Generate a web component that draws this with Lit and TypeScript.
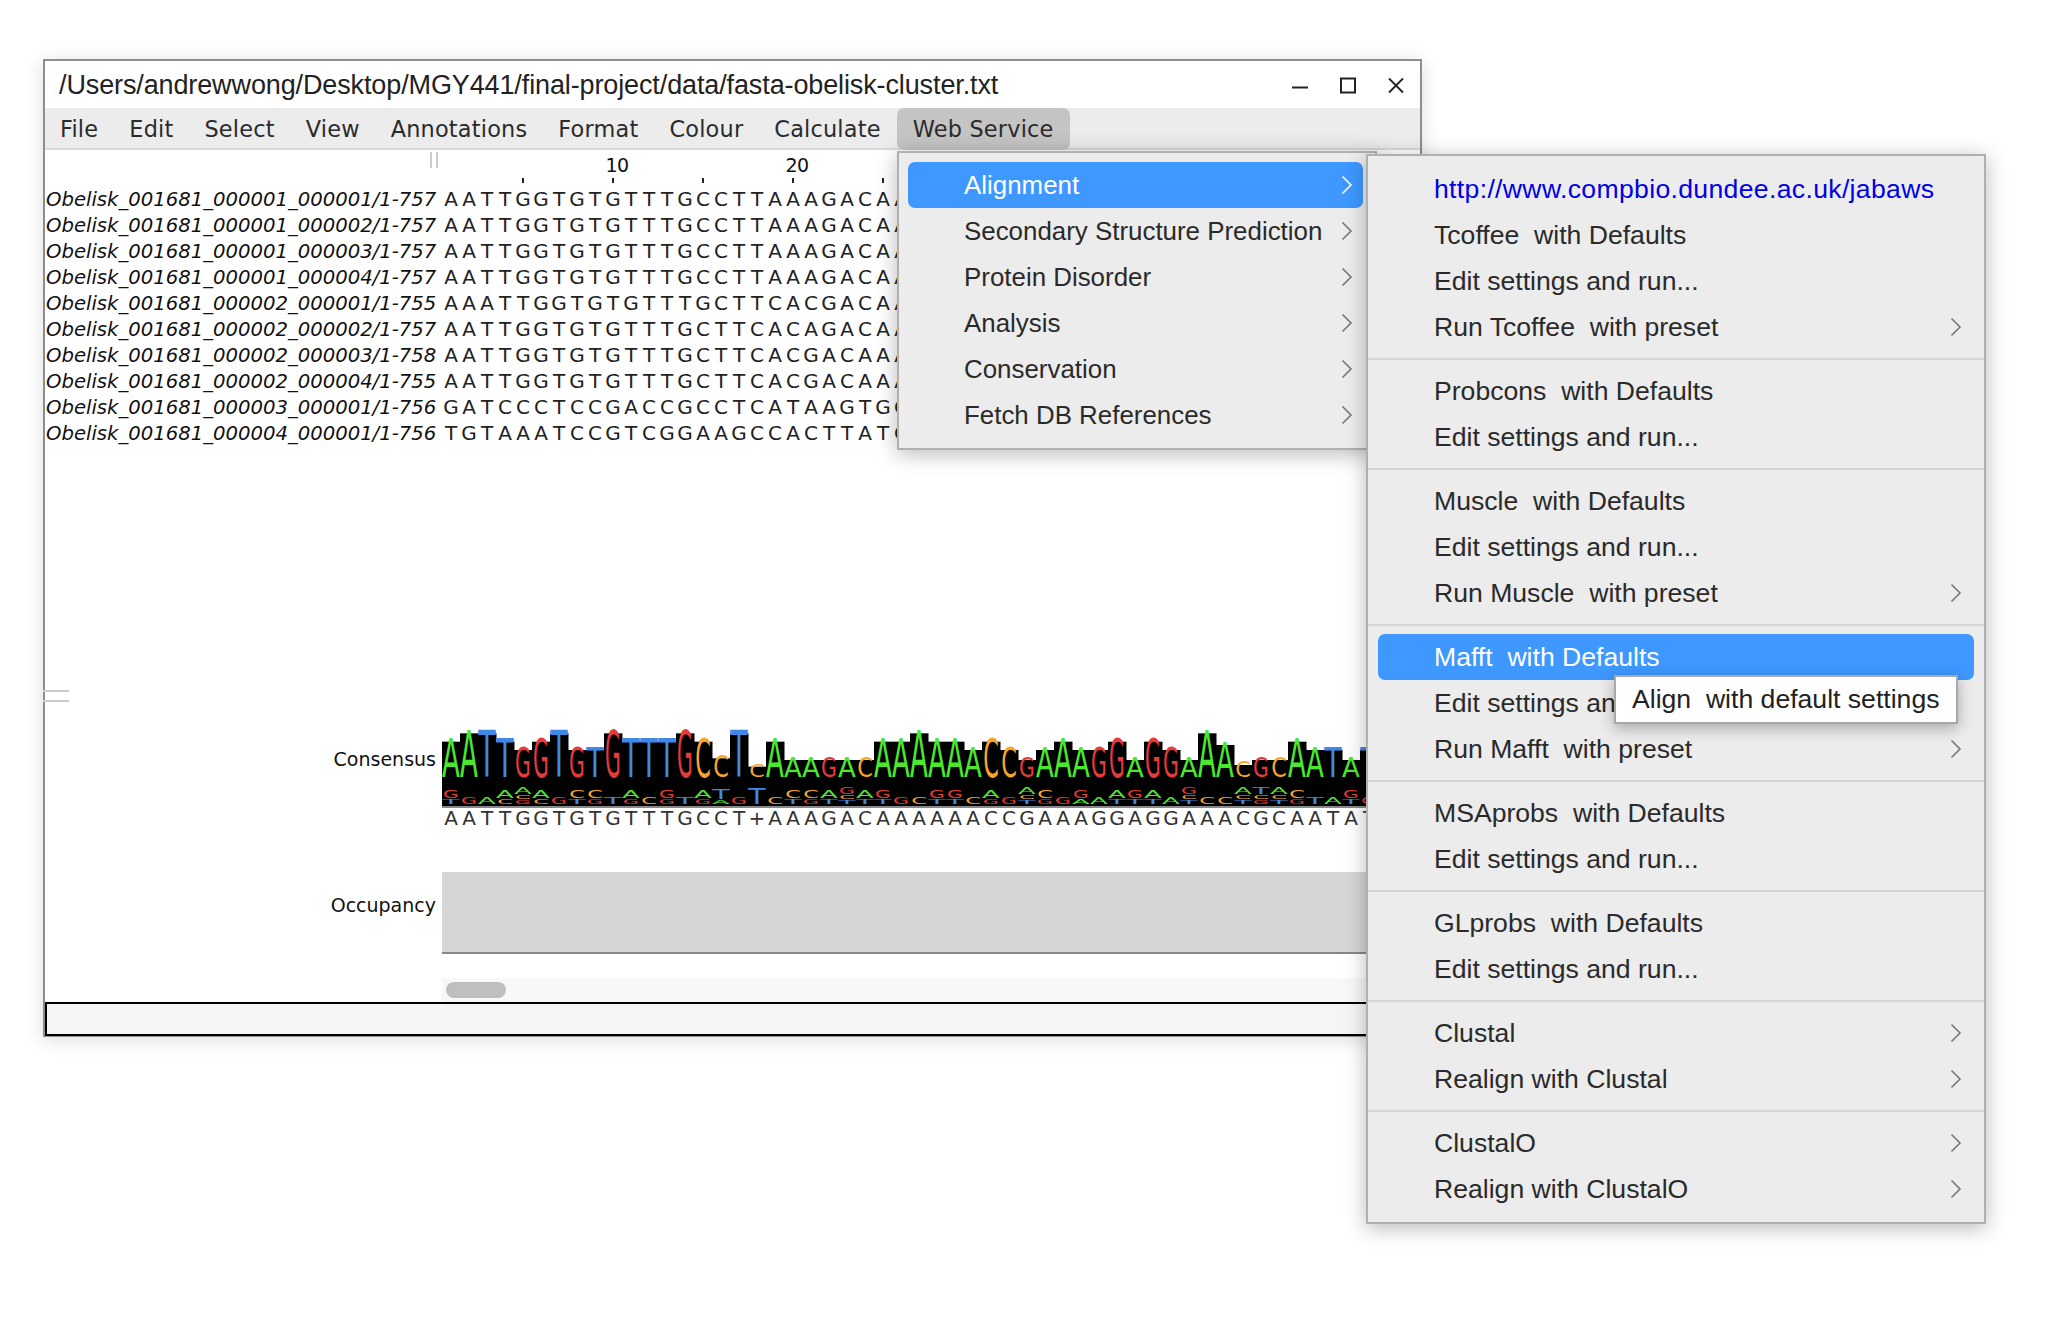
import { LitElement, html, css, svg, nothing } from "lit";
import { customElement } from "lit/decorators.js";

const COL = 18;
const MENU = ["File", "Edit", "Select", "View", "Annotations", "Format", "Colour", "Calculate"];
const SEQS: [string, string][] = [
  ["Obelisk_001681_000001_000001/1-757", "AATTGGTGTGTTTGCCTTAAAGACAA"],
  ["Obelisk_001681_000001_000002/1-757", "AATTGGTGTGTTTGCCTTAAAGACAA"],
  ["Obelisk_001681_000001_000003/1-757", "AATTGGTGTGTTTGCCTTAAAGACAA"],
  ["Obelisk_001681_000001_000004/1-757", "AATTGGTGTGTTTGCCTTAAAGACAA"],
  ["Obelisk_001681_000002_000001/1-755", "AAATTGGTGTGTTTGCTTCACGACAA"],
  ["Obelisk_001681_000002_000002/1-757", "AATTGGTGTGTTTGCTTCACAGACAA"],
  ["Obelisk_001681_000002_000003/1-758", "AATTGGTGTGTTTGCTTCACGACAAA"],
  ["Obelisk_001681_000002_000004/1-755", "AATTGGTGTGTTTGCTTCACGACAAA"],
  ["Obelisk_001681_000003_000001/1-756", "GATCCCTCCGACCGCCTCATAAGTGC"],
  ["Obelisk_001681_000004_000001/1-756", "TGTAAATCCGTCGGAAGCCACTTATC"],
];
const CONSENSUS = "AATTGGTGTGTTTGCCT+AAAGACAAAAAACCGAAAGGAGGAAACGCAATAT";
const TOPS = [55,30,30,55,80,55,30,80,80,30,55,55,55,30,55,105,30,130,55,110,110,110,110,110,55,55,30,55,55,80,55,80,110,80,55,80,80,55,110,55,80,110,30,65,125,110,110,55,80,80,110,80];
const LOWER = ["GT","G","A","AC","ACG","AC","G","CT","CG","T","AG","C","GG","T","AG","TA","G","T","C","CT","CG","AT","GCT","AT","GT","G","C","GT","GT","C","AG","G","ACT","CG","G","GA","A","AT","GT","AT","A","GCT","C","C","ACT","TCG","ACT","CG","T","A","GT","G"];
const SX: Record<string, number> = { A: 1.3, T: 1.42, G: 1.02, C: 1.12 };
const MAIN = ["Alignment", "Secondary Structure Prediction", "Protein Disorder", "Analysis", "Conservation", "Fetch DB References"];

type Item = { t: string; more?: boolean; link?: boolean; on?: boolean; tip?: boolean } | null;
const EDIT = "Edit settings and run...";
const SUB: Item[] = [
  { t: "http://www.compbio.dundee.ac.uk/jabaws", link: true },
  { t: "Tcoffee  with Defaults" }, { t: EDIT }, { t: "Run Tcoffee  with preset", more: true }, null,
  { t: "Probcons  with Defaults" }, { t: EDIT }, null,
  { t: "Muscle  with Defaults" }, { t: EDIT }, { t: "Run Muscle  with preset", more: true }, null,
  { t: "Mafft  with Defaults", on: true }, { t: EDIT, tip: true }, { t: "Run Mafft  with preset", more: true }, null,
  { t: "MSAprobs  with Defaults" }, { t: EDIT }, null,
  { t: "GLprobs  with Defaults" }, { t: EDIT }, null,
  { t: "Clustal", more: true }, { t: "Realign with Clustal", more: true }, null,
  { t: "ClustalO", more: true }, { t: "Realign with ClustalO", more: true },
];

const chevron = html`<svg class="chev" width="12" height="20" viewBox="0 0 12 20"><path d="M1.5 1.5 L10 10 L1.5 18.5"></path></svg>`;

function glyph(l: string, cx: number, baseline: number, h: number) {
  const sy = h / 14.6;
  const sx = SX[l];
  return svg`<text class=${"l" + l} text-anchor="middle" transform="translate(${cx} ${baseline}) scale(${sx} ${sy})">${l}</text>`;
}

function logo() {
  const W = 924, H = 84, BASE = 55;
  const parts: unknown[] = [];
  TOPS.forEach((top, i) => {
    const x = i * COL;
    const h = (170 - top) / 3;
    parts.push(svg`<rect x=${x} y=${BASE - h + 3} width=${COL + 0.5} height=${H - BASE + h - 3} fill="#000"></rect>`);
  });
  TOPS.forEach((top, i) => {
    const cx = i * COL + COL / 2;
    const h = (170 - top) / 3;
    const l = CONSENSUS[i] === "+" ? "C" : CONSENSUS[i];
    parts.push(glyph(l, cx, BASE, h));
    const low = LOWER[i];
    const sizes = low.length === 1 ? [i === 17 ? 15 : 6] : low.length === 2 ? (i === 15 ? [10, 4] : [8, 5]) : [6, 4, 4];
    let y = 82;
    for (let k = low.length - 1; k >= 0; k--) {
      parts.push(glyph(low[k], cx, y, sizes[k]));
      y -= sizes[k] + 1;
    }
  });
  return html`<svg class="logo" width=${W} height=${H} viewBox="0 0 ${W} ${H}">${parts}</svg>`;
}

@customElement("app-root")
export class AppRoot extends LitElement {
  static styles = css`
    :host { display: block; background: #fff; height: 1320px; padding: 59px 0 0 43px; box-sizing: border-box; overflow: hidden; }
    .win { position: relative; width: 1379px; box-sizing: border-box; border: 2px solid #8e8e8e; border-bottom-width: 1.5px; background: #fff; box-shadow: 0 3px 18px rgba(0,0,0,.14); }
    .title { height: 47px; box-sizing: border-box; padding: 2px 0 0 14px; display: flex; align-items: center; font: 27px "Liberation Sans", Arial, sans-serif; color: #222; letter-spacing: -0.12px; }
    .title span { flex: 1; }
    .ctl { display: flex; width: 129px; flex: none; height: 24px; align-items: center; }
    .ctl svg { display: block; flex: none; margin-right: 30px; }
    .bar { height: 42px; box-sizing: border-box; display: flex; background: #ececec; border-bottom: 2px solid #d9d9d9; font: 22.4px "DejaVu Sans", sans-serif; letter-spacing: 0.2px; color: #2b2b2b; }
    .bar div { padding: 0 16px 0 15px; display: flex; align-items: center; height: 42px; }
    .bar .open { background: #c4c4c4; border-radius: 7px; padding: 0 16px; }
    .ruler { display: flex; height: 36px; }
    .gutter { width: 397px; display: flex; justify-content: flex-end; padding-right: 4px; box-sizing: border-box; flex: none; }
    .grip { width: 8px; height: 16px; margin-top: 2px; box-sizing: border-box; border: solid #ccc; border-width: 0 2px; }
    .rc { width: 18px; flex: none; display: flex; flex-direction: column; align-items: center; justify-content: flex-end; padding-bottom: 3px; box-sizing: border-box; font: 19px "DejaVu Sans", sans-serif; color: #111; }
    .num { white-space: nowrap; line-height: 20px; margin: 0 0 3px 8px; letter-spacing: -0.5px; }
    .tick { width: 2px; height: 5px; background: #222; }
    .row { display: flex; height: 26px; align-items: center; white-space: nowrap; overflow: hidden; }
    .name { width: 397px; flex: none; padding-left: 1px; box-sizing: border-box; font: italic 19.66px "DejaVu Sans", sans-serif; letter-spacing: -0.02px; color: #111; }
    .c { width: 18px; flex: none; text-align: center; font: 20px "DejaVu Sans", sans-serif; color: #222; }
    .split { margin: 244px 0 0 -2px; width: 26px; height: 12px; box-sizing: border-box; border: solid #ccc; border-width: 2px 0; }
    .ann { display: flex; }
    .alabel { width: 397px; flex: none; box-sizing: border-box; padding-right: 6px; text-align: right; font: 19px "DejaVu Sans", sans-serif; color: #111; line-height: 24px; }
    .cons { margin-top: 20px; height: 113px; }
    .cons .alabel { padding-top: 25px; }
    .logo { display: block; border-bottom: 2px solid #888; }
    .logo text { font: 20px "DejaVu Sans", sans-serif; }
    .lA { fill: #4be82e; } .lT { fill: #3e88e6; } .lG { fill: #e63a3a; } .lC { fill: #f7a62c; }
    .cline { display: flex; height: 20px; align-items: center; overflow: hidden; width: 924px; }
    .cline .c { color: #333; }
    .occ { margin-top: 37px; height: 82px; }
    .occ .alabel { padding-top: 21px; }
    .occbar { width: 935px; height: 82px; box-sizing: border-box; background: #d6d6d6; border-bottom: 2px solid #888; }
    .scroll { margin: 24px 0 0 397px; height: 24px; background: #f8f8f8; padding: 4px; box-sizing: border-box; }
    .thumb { width: 60px; height: 16px; border-radius: 8px; background: #bfbfbf; }
    .status { height: 34px; box-sizing: border-box; border: 2px solid #000; background: #f5f5f5; }
    .menu { position: absolute; box-sizing: border-box; background: #ececec; border: 2px solid #b0b0b0; box-shadow: 0 4px 20px rgba(0,0,0,.28); font: 26.6px "Liberation Sans", Arial, sans-serif; color: #2a2a2a; }
    .main { left: 852px; top: 90px; width: 480px; padding: 9px 9px 10px; font-size: 25.9px; }
    .sub { left: 1321px; top: 93px; width: 620px; padding: 10px 10px 10px; }
    .mi { height: 46px; display: flex; align-items: center; white-space: pre; padding: 0 12px 0 56px; justify-content: space-between; border-radius: 7px; position: relative; }
    .mi.on { background: #3e98ff; color: #fff; }
    .mi.link { color: #0000e6; letter-spacing: 0.33px; }
    .main .mi { width: 455px; box-sizing: border-box; padding-right: 10px; }
    .sep { height: 18px; margin: 0 -10px; display: flex; align-items: center; }
    .sep::after { content: ""; flex: 1; height: 2px; background: #d4d4d4; }
    .chev { flex: none; }
    .chev path { fill: none; stroke: #777; stroke-width: 1.6; }
    .on .chev path { stroke: #fff; }
    .tip { position: absolute; left: 236px; top: -5px; width: 344px; height: 49px; box-sizing: border-box; background: #fff; border: 2px solid #a8a8a8; box-shadow: 0 4px 14px rgba(0,0,0,.3); padding-left: 16px; display: flex; align-items: center; color: #222; z-index: 2; }
  `;

  private seqRow(s: string) {
    return [...s].map((c) => html`<span class="c">${c}</span>`);
  }

  render() {
    return html`
      <div class="win">
        <div class="title">
          <span>/Users/andrewwong/Desktop/MGY441/final-project/data/fasta-obelisk-cluster.txt</span>
          <div class="ctl">
            <svg width="18" height="18" viewBox="0 0 18 18"><path d="M1 10.5H17" stroke="#222" stroke-width="2"/></svg>
            <svg width="18" height="18" viewBox="0 0 18 18"><rect x="2" y="1.5" width="14" height="14" fill="none" stroke="#222" stroke-width="2"/></svg>
            <svg width="18" height="18" viewBox="0 0 18 18"><path d="M2 1.5L16 15.5M16 1.5L2 15.5" stroke="#222" stroke-width="1.8"/></svg>
          </div>
        </div>
        <div class="bar">
          ${MENU.map((m) => html`<div>${m}</div>`)}
          <div class="open">Web Service</div>
        </div>
        <div class="ruler">
          <div class="gutter"><div class="grip"></div></div>
          ${Array.from({ length: 26 }, (_, i) => html`<div class="rc">
            ${i === 9 ? html`<span class="num">10</span>` : i === 19 ? html`<span class="num">20</span>` : nothing}
            ${(i + 1) % 5 === 0 ? html`<div class="tick"></div>` : nothing}
          </div>`)}
        </div>
        ${SEQS.map(([n, s]) => html`<div class="row"><span class="name">${n}</span>${this.seqRow(s)}</div>`)}
        <div class="split"></div>
        <div class="ann cons">
          <div class="alabel">Consensus</div>
          <div>
            ${logo()}
            <div class="cline">${this.seqRow(CONSENSUS)}</div>
          </div>
        </div>
        <div class="ann occ">
          <div class="alabel">Occupancy</div>
          <div class="occbar"></div>
        </div>
        <div class="scroll"><div class="thumb"></div></div>
        <div class="status"></div>

        <div class="menu main">
          ${MAIN.map((m, i) => html`<div class=${i === 0 ? "mi on" : "mi"}><span>${m}</span>${chevron}</div>`)}
        </div>
        <div class="menu sub">
          ${SUB.map((it) => it === null
            ? html`<div class="sep"></div>`
            : html`<div class="mi ${it.on ? "on" : ""} ${it.link ? "link" : ""}"><span>${it.t}</span>${it.more ? chevron : nothing}${it.tip ? html`<div class="tip">Align  with default settings</div>` : nothing}</div>`)}
        </div>
      </div>
    `;
  }
}
